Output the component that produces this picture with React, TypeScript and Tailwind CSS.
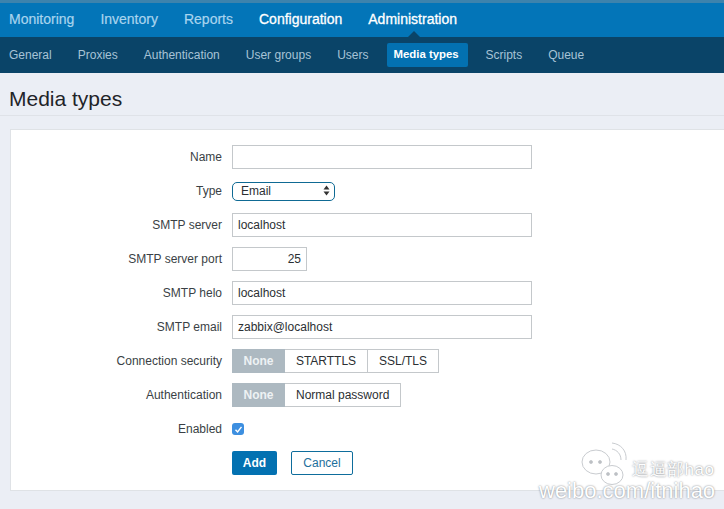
import React from 'react';

const topItems = [
  { label: 'Monitoring', active: false },
  { label: 'Inventory', active: false },
  { label: 'Reports', active: false },
  { label: 'Configuration', active: true },
  { label: 'Administration', active: true },
];

const subItems = ['General', 'Proxies', 'Authentication', 'User groups', 'Users', 'Media types', 'Scripts', 'Queue'];

const Row = ({ label, children }: { label: string; children: React.ReactNode }) => (
  <div className="flex h-6 items-center">
    <div className="w-[211px] text-right text-[#3a3f45]">{label}</div>
    <div className="ml-[10px] flex items-center">{children}</div>
  </div>
);

const TextInput = ({ value = '', narrow = false }: { value?: string; narrow?: boolean }) => (
  <div
    className={`flex h-6 items-center border border-[#c4c8cb] bg-white px-[5px] text-[#2b2f33] ${
      narrow ? 'w-[75px] justify-end' : 'w-[300px]'
    }`}
  >
    {value}
  </div>
);

const Segmented = ({ items }: { items: string[] }) => (
  <div className="flex h-6">
    {items.map((item, i) => (
      <div
        key={item}
        className={
          i === 0
            ? 'flex w-[53px] items-center justify-center bg-[#adb9c1] font-bold text-[#eef2f4]'
            : `flex items-center justify-center border border-l-0 border-[#c4c8cb] bg-white text-[#2b2f33] ${
                item === 'STARTTLS' ? 'w-[83px]' : 'px-[11px]'
              }`
        }
      >
        {item}
      </div>
    ))}
  </div>
);

export default function App() {
  return (
    <div className="relative h-[509px] w-[724px] overflow-hidden bg-[#ebeef5] font-['Liberation_Sans',Arial,sans-serif] text-xs">
      <div className="relative flex h-[37px] items-center gap-[26px] border-t-[3px] border-[#3d83ad] bg-[#0375b8] pb-[2px] pl-[9px] text-sm">
        {topItems.map((item) => (
          <span
            key={item.label}
            className={item.active ? 'text-white [-webkit-text-stroke:0.3px_white]' : 'text-[#a9d4ee] [-webkit-text-stroke:0.2px_#a9d4ee]'}
          >
            {item.label}
          </span>
        ))}
        <div className="absolute bottom-0 left-[408px] h-0 w-0 border-x-[6px] border-b-[6px] border-x-transparent border-b-[#0a4468]" />
      </div>

      <div className="flex h-[36px] items-center gap-[10px] bg-[#0a4468] pl-px">
        {subItems.map((item) =>
          item === 'Media types' ? (
            <span key={item} className="flex h-6 w-[81px] items-center rounded-[2px] bg-[#0371b1] pl-[7px] text-[11.4px] font-bold text-white">
              {item}
            </span>
          ) : (
            <span key={item} className="px-2 text-[#a7c3d6]">
              {item}
            </span>
          ),
        )}
      </div>

      <div className="flex h-[43px] items-end border-b border-[#dfe2e8] pb-[2px] pl-[9px]">
        <h1 className="text-[21px] leading-[28px] text-[#1f2429]">Media types</h1>
      </div>

      <div className="ml-[10px] mt-[13px] flex h-[362px] flex-col gap-[10px] border border-r-0 border-[#dfe2e6] bg-white pt-[15px]">
        <Row label="Name">
          <TextInput />
        </Row>
        <Row label="Type">
          <div className="flex h-[19px] w-[103px] items-center justify-between rounded-[5px] border border-[#0f6a94] bg-white pb-px pl-[8px] pr-[4px] text-[#2b2f33]">
            <span>Email</span>
            <svg width="7" height="11" viewBox="0 0 7 11" fill="#333">
              <path d="M3.5 0.5 L6.5 4.5 H0.5 Z" />
              <path d="M3.5 10.5 L6.5 6.5 H0.5 Z" />
            </svg>
          </div>
        </Row>
        <Row label="SMTP server">
          <TextInput value="localhost" />
        </Row>
        <Row label="SMTP server port">
          <TextInput value="25" narrow />
        </Row>
        <Row label="SMTP helo">
          <TextInput value="localhost" />
        </Row>
        <Row label="SMTP email">
          <TextInput value="zabbix@localhost" />
        </Row>
        <Row label="Connection security">
          <Segmented items={['None', 'STARTTLS', 'SSL/TLS']} />
        </Row>
        <Row label="Authentication">
          <Segmented items={['None', 'Normal password']} />
        </Row>
        <Row label="Enabled">
          <div className="flex h-3 w-3 items-center justify-center rounded-[3px] bg-[#3d8fe0]">
            <svg width="9" height="9" viewBox="0 0 9 9" fill="none" stroke="white" strokeWidth="1.4">
              <path d="M1.5 4.8 L3.6 7 L7.5 1.8" />
            </svg>
          </div>
        </Row>
        <div className="flex h-6 gap-[14px] pl-[221px]">
          <button className="h-6 w-[45px] rounded-[2px] bg-[#0371b1] font-bold text-white">Add</button>
          <button className="h-6 w-[62px] rounded-[2px] border border-[#0e6d9c] bg-white text-[#1d6f9c]">Cancel</button>
        </div>
      </div>

      <svg className="absolute left-[580px] top-[440px]" width="52" height="46" viewBox="0 0 52 46" fill="#fff" stroke="#c9ccd0" strokeWidth="1">
        <ellipse cx="16" cy="22" rx="14" ry="12" />
        <ellipse cx="32" cy="35" rx="11" ry="9.5" />
        <circle cx="11" cy="22" r="1.5" fill="#b9bcc0" />
        <circle cx="20" cy="22" r="1.5" fill="#b9bcc0" />
        <circle cx="28" cy="34" r="1.5" fill="#b9bcc0" />
        <circle cx="36" cy="34" r="1.5" fill="#b9bcc0" />
        <path d="M32 3 C41 4 47 11 46 20 M32 9 C37 10 41 14 41 20" fill="none" />
      </svg>
      <div className="absolute left-[632px] top-[461px] text-[17px] leading-[18px] tracking-[0.5px] text-white [text-shadow:0_0_2px_#6f747a]">
        逗逼部hao
      </div>
      <div className="absolute left-[539px] top-[480px] text-[22px] leading-[22px] text-white [text-shadow:0_0_2px_#6f747a]">
        weibo.com/itnihao
      </div>
    </div>
  );
}
